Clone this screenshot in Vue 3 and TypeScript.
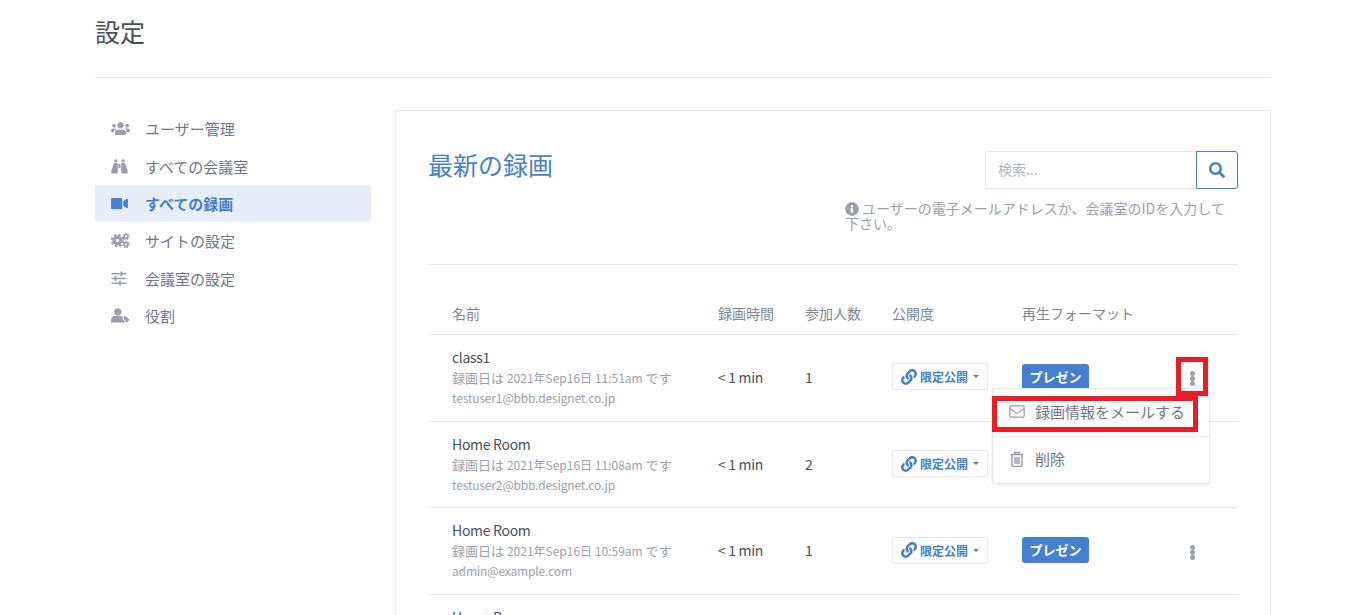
<template>
  <div class="page">
    <h1 class="page-title">設定</h1>
    <hr class="page-rule" />

    <div class="layout">
      <nav class="side-nav">
        <a v-for="item in navItems" :key="item.label" class="nav-item" :class="{ active: item.active }">
          <span class="nav-icon">
            <svg v-if="item.icon === 'users'" width="19" height="15" viewBox="0 0 640 512"><path :d="usersPath" /></svg>
            <svg v-else-if="item.icon === 'binoculars'" width="17" height="15" viewBox="0 0 17 15">
              <path d="M3.4 0.6h3v2.6h-3zM10.6 0.6h3v2.6h-3zM3 4h3.8v10.4H0.4V11zM10.2 4H14l2.6 7v3.4h-6.4zM7.4 5h2.2v4H7.4z" />
            </svg>
            <svg v-else-if="item.icon === 'video'" width="17" height="15" viewBox="0 0 576 512"><path :d="videoPath" /></svg>
            <svg v-else-if="item.icon === 'cogs'" width="19" height="15" viewBox="0 0 19 15">
              <circle cx="6.5" cy="7.5" r="3.4" fill="none" stroke="currentColor" stroke-width="3.2" />
              <circle cx="6.5" cy="7.5" r="5.8" fill="none" stroke="currentColor" stroke-width="2" stroke-dasharray="2.6 1.95" />
              <circle cx="15" cy="3.4" r="1.9" fill="none" stroke="currentColor" stroke-width="1.7" />
              <circle cx="15" cy="3.4" r="3.1" fill="none" stroke="currentColor" stroke-width="1.1" stroke-dasharray="1.5 1.2" />
              <circle cx="15" cy="11.6" r="1.9" fill="none" stroke="currentColor" stroke-width="1.7" />
              <circle cx="15" cy="11.6" r="3.1" fill="none" stroke="currentColor" stroke-width="1.1" stroke-dasharray="1.5 1.2" />
            </svg>
            <svg v-else-if="item.icon === 'sliders'" width="16" height="15" viewBox="0 0 16 15">
              <path d="M0.5 2h15v1.6H0.5zM0.5 6.7h15v1.6H0.5zM0.5 11.4h15V13H0.5zM9.5 0.4h2v4.8h-2zM3.5 5.1h2v4.8h-2zM8 9.8h2v4.8H8z" />
            </svg>
            <svg v-else width="19" height="15" viewBox="0 0 19 15">
              <circle cx="6.8" cy="3.8" r="3.6" />
              <path d="M0 14.6v-2.4c0-2.6 2-4.4 4.4-4.4h4.6c1 0 1.9.3 2.6.8v2.4l3 3.6H0z" />
              <path d="M12.6 8.6h2.6l3.4 3.2-2.7 2.8-3.3-3.3z" />
            </svg>
          </span>
          {{ item.label }}
        </a>
      </nav>

      <section class="card">
        <div class="card-head">
          <h2 class="card-title">最新の録画</h2>
          <div class="search-area">
            <div class="search-box">
              <input class="search-input" placeholder="検索..." />
              <button class="search-btn">
                <svg width="16" height="16" viewBox="0 0 512 512"><path :d="searchPath" /></svg>
              </button>
            </div>
            <p class="search-help">
              <svg width="14" height="14" viewBox="0 0 512 512"><path :d="infoPath" /></svg>ユーザーの電子メールアドレスか、会議室のIDを入力して下さい。
            </p>
          </div>
        </div>
        <hr class="card-rule" />

        <div class="table">
          <div class="row header-row">
            <div>名前</div>
            <div>録画時間</div>
            <div>参加人数</div>
            <div>公開度</div>
            <div>再生フォーマット</div>
            <div></div>
          </div>

          <div v-for="(rec, i) in recordings" :key="i" class="row">
            <div>
              <div class="rec-name">{{ rec.name }}</div>
              <div class="rec-date">録画日は <span class="rec-stamp">{{ rec.date }}</span> です</div>
              <div class="rec-mail">{{ rec.mail }}</div>
            </div>
            <div class="rec-length">{{ rec.length }}</div>
            <div>{{ rec.users }}</div>
            <div>
              <button class="visibility-btn">
                <svg width="16" height="16" viewBox="0 0 512 512"><path :d="linkPath" /></svg>
                限定公開
                <span class="caret"></span>
              </button>
            </div>
            <div><span class="format-badge">プレゼン</span></div>
            <div class="more-cell">
              <span class="more-dots"><i></i><i></i><i></i></span>
              <span v-if="i === 0" class="mark mark-dots"></span>
            </div>

            <div v-if="i === 0" class="menu">
              <div class="menu-item">
                <svg width="16" height="13" viewBox="0 0 16 13" fill="none" stroke="currentColor" stroke-width="1.3">
                  <rect x="0.9" y="0.9" width="14.2" height="11.2" rx="1.2" />
                  <path d="M1 3.4l5.5 4.2c.9.7 2.1.7 3 0L15 3.4" />
                </svg>
                録画情報をメールする
              </div>
              <div class="menu-divider"></div>
              <div class="menu-item">
                <svg width="16" height="16" viewBox="0 0 14 16" fill="none" stroke="currentColor" stroke-width="1.5">
                  <path d="M0.6 3.4h12.8M4.6 3.2V1.4h4.8v1.8M2 3.4v10.8c0 .7.5 1.2 1.2 1.2h7.6c.7 0 1.2-.5 1.2-1.2V3.4M5 6v7M7 6v7M9 6v7" />
                </svg>
                削除
              </div>
              <span class="mark mark-item"></span>
            </div>
          </div>
        </div>
      </section>
    </div>
  </div>
</template>

<script setup lang="ts">
interface NavItem {
  label: string
  icon: string
  active?: boolean
}

interface Recording {
  name: string
  date: string
  mail: string
  length: string
  users: number
}

const navItems: NavItem[] = [
  { label: 'ユーザー管理', icon: 'users' },
  { label: 'すべての会議室', icon: 'binoculars' },
  { label: 'すべての録画', icon: 'video', active: true },
  { label: 'サイトの設定', icon: 'cogs' },
  { label: '会議室の設定', icon: 'sliders' },
  { label: '役割', icon: 'tag' },
]

const recordings: Recording[] = [
  { name: 'class1', date: '2021年Sep16日 11:51am', mail: 'testuser1@bbb.designet.co.jp', length: '< 1 min', users: 1 },
  { name: 'Home Room', date: '2021年Sep16日 11:08am', mail: 'testuser2@bbb.designet.co.jp', length: '< 1 min', users: 2 },
  { name: 'Home Room', date: '2021年Sep16日 10:59am', mail: 'admin@example.com', length: '< 1 min', users: 1 },
  { name: 'Home Room', date: '2021年Sep16日 10:40am', mail: 'admin@example.com', length: '< 1 min', users: 1 },
]

const usersPath = 'M96 224c35.3 0 64-28.7 64-64s-28.7-64-64-64-64 28.7-64 64 28.7 64 64 64zm448 0c35.3 0 64-28.7 64-64s-28.7-64-64-64-64 28.7-64 64 28.7 64 64 64zm32 32h-64c-17.6 0-33.5 7.1-45.1 18.6 40.3 22.1 68.9 62 75.1 109.4h66c17.7 0 32-14.3 32-32v-32c0-35.3-28.7-64-64-64zm-256 0c61.9 0 112-50.1 112-112S381.9 32 320 32 208 82.1 208 144s50.1 112 112 112zm76.8 32h-8.3c-20.8 10-43.9 16-68.5 16s-47.6-6-68.5-16h-8.3C179.6 288 128 339.6 128 403.2V432c0 26.5 21.5 48 48 48h288c26.5 0 48-21.5 48-48v-28.8c0-63.6-51.6-115.2-115.2-115.2zm-223.7-13.4C161.5 263.1 145.6 256 128 256H64c-35.3 0-64 28.7-64 64v32c0 17.7 14.3 32 32 32h65.9c6.3-47.4 34.9-87.3 75.2-109.4z'
const videoPath = 'M336.2 64H47.8C21.4 64 0 85.4 0 111.8v288.4C0 426.6 21.4 448 47.8 448h288.4c26.4 0 47.8-21.4 47.8-47.8V111.8c0-26.4-21.4-47.8-47.8-47.8zm189.4 37.7L416 177.3v157.4l109.6 75.5c21.2 14.6 50.4-.3 50.4-25.8V127.5c0-25.4-29.1-40.4-50.4-25.8z'
const searchPath = 'M505 442.7L405.3 343c-4.5-4.5-10.6-7-17-7H372c27.6-35.3 44-79.7 44-128C416 93.1 322.9 0 208 0S0 93.1 0 208s93.1 208 208 208c48.3 0 92.7-16.4 128-44v16.3c0 6.4 2.5 12.5 7 17l99.7 99.7c9.4 9.4 24.6 9.4 33.9 0l28.3-28.3c9.4-9.4 9.4-24.6.1-34zM208 336c-70.7 0-128-57.2-128-128 0-70.7 57.2-128 128-128 70.7 0 128 57.2 128 128 0 70.7-57.2 128-128 128z'
const infoPath = 'M256 8C119 8 8 119.1 8 256c0 137 111 248 248 248s248-111 248-248C504 119.1 393 8 256 8zm0 110c23.2 0 42 18.8 42 42s-18.8 42-42 42-42-18.8-42-42 18.8-42 42-42zm56 254c0 6.6-5.4 12-12 12h-88c-6.6 0-12-5.4-12-12v-24c0-6.6 5.4-12 12-12h12v-64h-12c-6.6 0-12-5.4-12-12v-24c0-6.6 5.4-12 12-12h64c6.6 0 12 5.4 12 12v100h12c6.6 0 12 5.4 12 12v24z'
const linkPath = 'M326.612 185.391c59.747 59.809 58.927 155.698.36 214.59-.11.12-.24.25-.36.37l-67.2 67.2c-59.27 59.27-155.699 59.262-214.96 0-59.27-59.26-59.27-155.7 0-214.96l37.106-37.106c9.84-9.84 26.786-3.3 27.294 10.606.648 17.722 3.826 35.527 9.69 52.721 1.986 5.822.567 12.262-3.783 16.612l-13.087 13.087c-28.026 28.026-28.905 73.66-1.155 101.96 28.024 28.579 74.086 28.749 102.325.51l67.2-67.19c28.191-28.191 28.073-73.757 0-101.83-3.701-3.694-7.429-6.564-10.341-8.569a16.037 16.037 0 0 1-6.947-12.606c-.396-10.567 3.348-21.456 11.698-29.806l21.054-21.055c5.521-5.521 14.182-6.199 20.584-1.731a152.482 152.482 0 0 1 20.522 17.197zM467.547 44.449c-59.261-59.262-155.69-59.27-214.96 0l-67.2 67.2c-.12.12-.25.25-.36.37-58.566 58.892-59.387 154.781.36 214.59a152.454 152.454 0 0 0 20.521 17.196c6.402 4.468 15.064 3.789 20.584-1.731l21.054-21.055c8.35-8.35 12.094-19.239 11.698-29.806a16.037 16.037 0 0 0-6.947-12.606c-2.912-2.005-6.64-4.875-10.341-8.569-28.073-28.073-28.191-73.639 0-101.83l67.2-67.19c28.239-28.239 74.3-28.069 102.325.51 27.75 28.3 26.872 73.934-1.155 101.96l-13.087 13.087c-4.35 4.35-5.769 10.79-3.783 16.612 5.864 17.194 9.042 34.999 9.69 52.721.509 13.906 17.454 20.446 27.294 10.606l37.106-37.106c59.271-59.259 59.271-155.699.001-214.959z'
</script>

<style>
html,
body {
  height: 615px;
  overflow: hidden;
  background: #fff;
}
</style>

<style scoped>
.page {
  width: 1176px;
  margin: 0 auto;
  font-family: "Noto Sans CJK JP", sans-serif;
  font-size: 14px;
  color: #495057;
}

.page-title {
  margin: 0;
  padding-top: 13px;
  font-size: 25px;
  font-weight: 400;
  line-height: 36px;
  color: #495057;
}

.page-rule {
  margin: 28px 0 32px;
  border: 0;
  border-top: 1px solid #e3e7ee;
}

.layout {
  display: flex;
  gap: 24px;
  align-items: flex-start;
}

.side-nav {
  flex: 0 0 276px;
  display: flex;
  flex-direction: column;
}

.nav-item {
  display: flex;
  align-items: center;
  height: 37.4px;
  padding-left: 16px;
  border-radius: 3px;
  font-size: 15px;
  color: #6e7687;
}

.nav-item.active {
  background: #e8eef8;
  color: #467fcf;
  font-weight: 700;
}

.nav-icon {
  flex: 0 0 34px;
  display: flex;
  align-items: center;
  color: #9aa0ac;
}

.active .nav-icon {
  color: #467fcf;
}

.nav-icon svg {
  fill: currentColor;
}

.card {
  flex: 1;
  height: 700px;
  padding: 0 32px;
  border: 1px solid #e3e7ee;
  border-radius: 3px;
  box-sizing: border-box;
}

.card-head {
  display: flex;
  justify-content: space-between;
  padding-top: 40px;
}

.card-title {
  margin: -2px 0 0;
  font-size: 25px;
  font-weight: 400;
  line-height: 30px;
  color: #467fcf;
}

.search-area {
  width: 393px;
  display: flex;
  flex-direction: column;
  align-items: flex-end;
}

.search-box {
  display: flex;
  width: 253px;
  height: 38px;
}

.search-input {
  flex: 1;
  min-width: 0;
  padding: 0 12px 2px;
  border: 1px solid #e3e7ee;
  border-right: 0;
  border-radius: 3px 0 0 3px;
  font: inherit;
  font-size: 14px;
  outline: none;
}

.search-input::placeholder {
  color: #adb5bd;
}

.search-btn {
  flex: 0 0 42px;
  display: flex;
  align-items: center;
  justify-content: center;
  padding: 0;
  background: #fff;
  border: 1px solid #467fcf;
  border-radius: 0 3px 3px 0;
}

.search-btn svg {
  fill: #467fcf;
}

.search-help {
  align-self: stretch;
  margin: 12px 0 0;
  font-size: 14px;
  line-height: 15px;
  color: #9aa0ac;
}

.search-help svg {
  fill: #9aa0ac;
  margin-right: 3px;
  vertical-align: -2px;
}

.card-rule {
  margin: 33px 0 0;
  border: 0;
  border-top: 1px solid #e3e7ee;
}

.table {
  margin-top: 32px;
}

.row {
  position: relative;
  display: grid;
  grid-template-columns: 266px 87px 87px 130px 1fr 48px;
  align-items: center;
  height: 86.7px;
  padding-left: 24px;
  padding-bottom: 2px;
  box-sizing: border-box;
  border-bottom: 1px solid #e3e7ee;
}

.header-row {
  height: 38px;
  padding-bottom: 5px;
  color: #7f8794;
}

.rec-name {
  line-height: 20px;
  margin-top: 1px;
  letter-spacing: -0.3px;
}

.rec-length {
  letter-spacing: -0.3px;
}

.rec-date {
  margin-top: 1px;
  font-size: 13px;
  line-height: 20px;
  color: #9aa0ac;
}

.rec-stamp {
  font-size: 12px;
}

.rec-mail {
  font-size: 12px;
  line-height: 20px;
  letter-spacing: -0.15px;
  color: #9aa0ac;
}

.visibility-btn {
  display: inline-flex;
  align-items: center;
  gap: 3px;
  width: 96px;
  height: 27px;
  padding: 0 0 0 8px;
  background: #fff;
  border: 1px solid #e3e7ee;
  border-radius: 3px;
  font: inherit;
  font-size: 12px;
  font-weight: 700;
  color: #467fcf;
  white-space: nowrap;
}

.visibility-btn svg {
  fill: #467fcf;
}

.caret {
  margin-left: 2px;
  border-top: 3px solid #6e7687;
  border-left: 3px solid transparent;
  border-right: 3px solid transparent;
}

.format-badge {
  display: inline-block;
  width: 67px;
  height: 26px;
  border-radius: 3px;
  background: #467fcf;
  color: #fff;
  font-size: 13px;
  font-weight: 700;
  line-height: 26px;
  text-align: center;
}

.more-cell {
  position: relative;
  display: flex;
  padding-top: 4px;
}

.more-dots {
  display: flex;
  flex-direction: column;
}

.more-dots i {
  width: 5px;
  height: 5px;
  border-radius: 50%;
  background: #9aa0ac;
}

.menu {
  position: absolute;
  left: 564px;
  top: 53px;
  z-index: 2;
  width: 218px;
  height: 96px;
  padding-top: 5px;
  box-sizing: border-box;
  background: #fff;
  border: 1px solid #e3e7ee;
  border-radius: 3px;
  box-shadow: 0 1px 3px rgba(0, 0, 0, 0.08);
}

.menu-item {
  display: flex;
  align-items: center;
  gap: 10px;
  height: 35px;
  padding-left: 16px;
  font-size: 15px;
  color: #6e7687;
}

.menu-item svg {
  color: #9aa0ac;
}

.menu-divider {
  margin: 7px 0 4px;
  border-top: 1px solid #e3e7ee;
}

.mark {
  position: absolute;
  border: 5px solid #ed1c24;
  box-sizing: border-box;
  z-index: 3;
}

.mark-dots {
  left: -14px;
  top: -10px;
  width: 32px;
  height: 39px;
}

.mark-item {
  left: -1px;
  top: 7px;
  width: 206px;
  height: 36px;
}
</style>
